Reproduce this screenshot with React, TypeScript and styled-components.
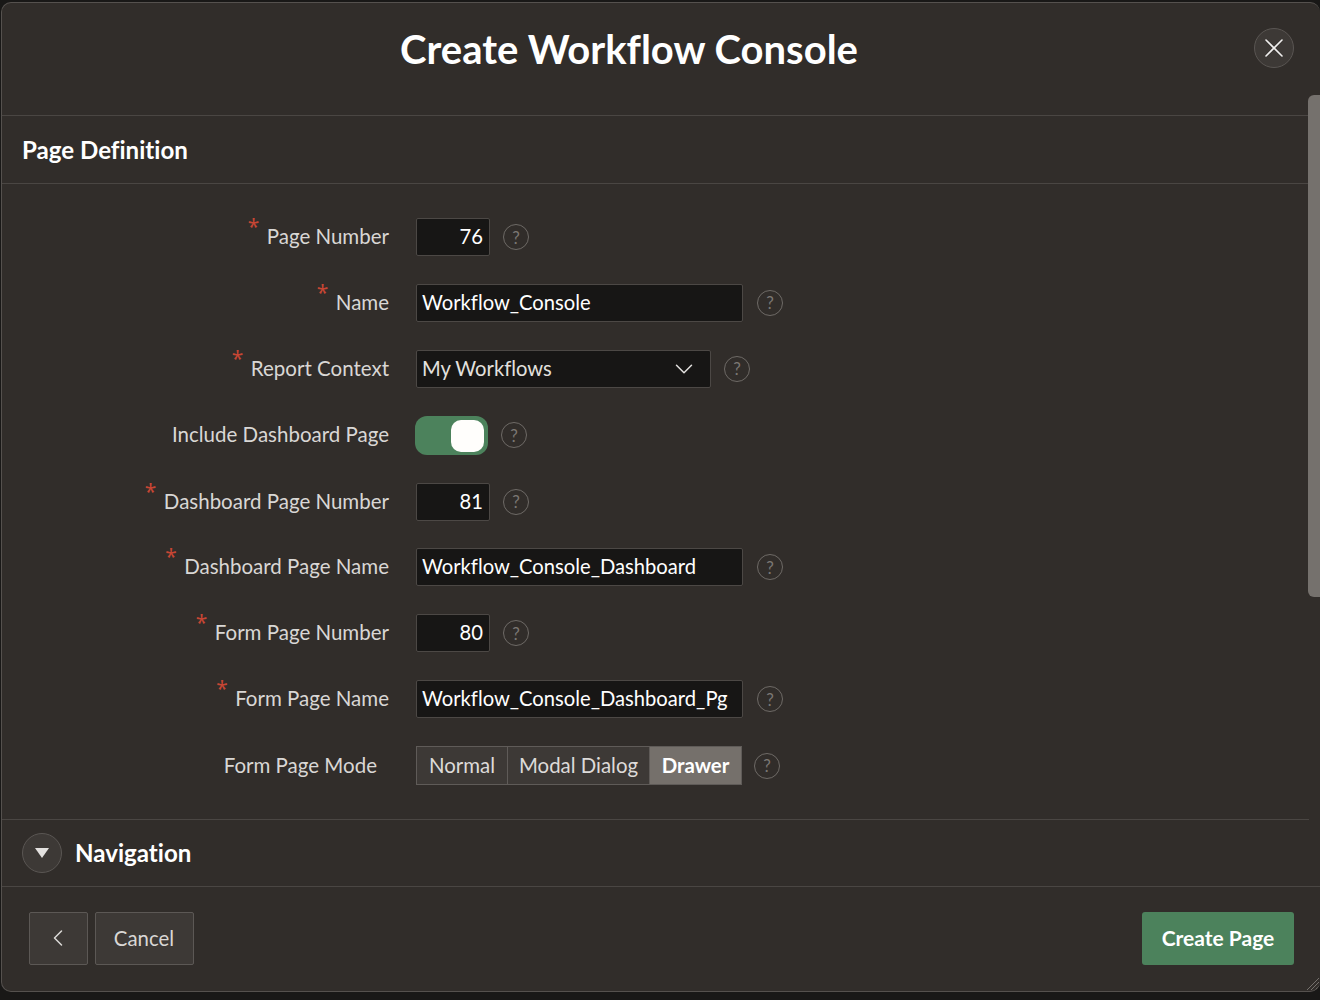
import styled, { createGlobalStyle } from "styled-components";
import { X, ChevronDown, ChevronLeft } from "lucide-react";

const GlobalStyle = createGlobalStyle`
  html, body {
    margin: 0;
    padding: 0;
    background: #191817;
    font-family: Lato, "Noto Sans", sans-serif;
    font-variant-ligatures: none;
  }
  * { box-sizing: border-box; }
`;

const Page = styled.div`
  width: 1320px;
  height: 1000px;
  padding: 2px 0 8px 1px;
  overflow: hidden;
`;

const Dialog = styled.div`
  position: relative;
  width: 100%;
  height: 990px;
  background: #312d2a;
  border: 1px solid #55514e;
  border-right: 0;
  border-radius: 10px;
  display: flex;
  flex-direction: column;
  overflow: hidden;
`;

const Header = styled.header`
  height: 112px;
  flex: none;
  position: relative;
  display: flex;
  padding: 0 64px 0 0;
  justify-content: center;
  align-items: flex-start;
`;

const Title = styled.h1`
  margin: 20px 0 0;
  font-size: 40px;
  line-height: 52px;
  font-weight: 700;
  color: #fff;
`;

const CloseButton = styled.button`
  position: absolute;
  top: 25px;
  right: 26px;
  width: 40px;
  height: 40px;
  border-radius: 50%;
  background: #3d3936;
  border: 1.5px solid #5a5653;
  color: #f0efee;
  display: flex;
  align-items: center;
  justify-content: center;
  padding: 0;
`;

const Content = styled.div`
  flex: 1;
  display: flex;
  flex-direction: column;
  margin-right: 11px;
`;

const SectionHead = styled.div<{ $height: number }>`
  height: ${({ $height }) => $height}px;
  flex: none;
  border-top: 1px solid #4a4643;
  border-bottom: 1px solid #4a4643;
  padding-left: 20px;
  display: flex;
  align-items: center;
  gap: 13px;
`;

const SectionTitle = styled.h2`
  margin: 0;
  padding-bottom: 1px;
  font-size: 24.1px;
  font-weight: 700;
  color: #fff;
`;

const FormBody = styled.div`
  flex: none;
  height: 635px;
  padding-top: 34px;
  display: flex;
  flex-direction: column;
  gap: 27.9px;
`;

const Row = styled.div`
  display: flex;
  align-items: center;
  min-height: 38px;
`;

const LabelCell = styled.div<{ $inset?: number }>`
  width: 414px;
  flex: none;
  padding-right: ${({ $inset }) => 27 + ($inset ?? 0)}px;
  padding-bottom: 2px;
  display: flex;
  justify-content: flex-end;
`;

const Label = styled.label`
  position: relative;
  font-size: 20.5px;
  line-height: 28px;
  color: #d9d7d5;
`;

const Asterisk = styled.span`
  position: absolute;
  left: -19px;
  top: -10px;
  font-family: "Noto Sans", sans-serif;
  font-size: 21px;
  line-height: 28px;
  color: #c74634;
`;

const Input = styled.div<{ $width: number; $align?: string }>`
  width: ${({ $width }) => $width}px;
  height: 38px;
  background: #171615;
  border: 1px solid #4c4845;
  border-radius: 2px;
  padding: 0 ${({ $align }) => ($align === "right" ? 6 : 5)}px 2px 5px;
  display: flex;
  align-items: center;
  justify-content: ${({ $align }) => ($align === "right" ? "flex-end" : "flex-start")};
  color: #fff;
  font-size: 20.2px;
`;

const Select = styled(Input)`
  justify-content: space-between;
  color: #e3e1df;
  padding: 0 11px 0 5px;
  svg {
    color: #e3e1df;
  }
`;

const SelectValue = styled.span`
  padding-bottom: 2px;
`;

const Toggle = styled.div`
  width: 73px;
  height: 39px;
  margin-left: -1px;
  border-radius: 12px;
  background: #4c825c;
  padding: 4px;
  display: flex;
  justify-content: flex-end;
`;

const Knob = styled.span`
  width: 33px;
  height: 32px;
  border-radius: 10px;
  background: #fffefc;
`;

const Segments = styled.div`
  display: flex;
  height: 39px;
  border: 1px solid #5f5b58;
`;

const Segment = styled.div<{ $active?: boolean; $width: number }>`
  width: ${({ $width }) => $width}px;
  display: flex;
  align-items: center;
  justify-content: center;
  padding-bottom: 1px;
  font-size: 20.4px;
  background: ${({ $active }) => ($active ? "#75706b" : "#3d3936")};
  color: ${({ $active }) => ($active ? "#fff" : "#dddbd9")};
  font-weight: ${({ $active }) => ($active ? 700 : 400)};
  & + & {
    border-left: 1px solid #5f5b58;
  }
`;

const Help = styled.span<{ $gap: number }>`
  margin-left: ${({ $gap }) => $gap}px;
  width: 26px;
  height: 26px;
  flex: none;
  border: 1.5px solid #6e6a66;
  border-radius: 50%;
  display: flex;
  align-items: center;
  justify-content: center;
  color: #7b7773;
  font-size: 17px;
  line-height: 1;
`;

const CollapseButton = styled.span`
  width: 40px;
  height: 40px;
  border-radius: 50%;
  background: #3d3936;
  border: 1.5px solid #5a5653;
  display: flex;
  align-items: center;
  justify-content: center;
`;

const Footer = styled.footer`
  flex: 1;
  display: flex;
  align-items: flex-start;
  justify-content: space-between;
  padding: 25px 26px 0 27px;
  margin-top: -1px;
  border-top: 1px solid #4a4643;
`;

const FooterLeft = styled.div`
  display: flex;
  gap: 7px;
`;

const GhostButton = styled.button<{ $width: number }>`
  width: ${({ $width }) => $width}px;
  height: 53px;
  background: #3d3936;
  border: 1px solid #5c5855;
  border-radius: 2px;
  color: #d9d7d5;
  font-family: inherit;
  font-size: 20.4px;
  display: flex;
  align-items: center;
  justify-content: center;
  padding: 0 1px 2px 0;
`;

const PrimaryButton = styled.button`
  width: 152px;
  height: 53px;
  background: #4c825c;
  border: 0;
  border-radius: 3px;
  color: #fff;
  font-family: inherit;
  font-size: 21px;
  font-weight: 700;
  padding: 0 0 2px;
`;

const ScrollThumb = styled.div`
  position: absolute;
  top: 92px;
  right: 0;
  width: 12px;
  height: 502px;
  border-radius: 6px 0 0 6px;
  background: #75716d;
`;

const Grip = styled.svg`
  position: absolute;
  right: 0;
  bottom: 0;
`;

type Field = {
  label: string;
  required?: boolean;
  kind: "number" | "text" | "select" | "toggle" | "segments";
  value?: string;
};

const fields: Field[] = [
  { label: "Page Number", required: true, kind: "number", value: "76" },
  { label: "Name", required: true, kind: "text", value: "Workflow_Console" },
  { label: "Report Context", required: true, kind: "select", value: "My Workflows" },
  { label: "Include Dashboard Page", kind: "toggle" },
  { label: "Dashboard Page Number", required: true, kind: "number", value: "81" },
  { label: "Dashboard Page Name", required: true, kind: "text", value: "Workflow_Console_Dashboard" },
  { label: "Form Page Number", required: true, kind: "number", value: "80" },
  { label: "Form Page Name", required: true, kind: "text", value: "Workflow_Console_Dashboard_Pg" },
  { label: "Form Page Mode", kind: "segments" },
];

function Control({ field }: { field: Field }) {
  switch (field.kind) {
    case "number":
      return (
        <>
          <Input $width={74} $align="right">{field.value}</Input>
          <Help $gap={13}>?</Help>
        </>
      );
    case "text":
      return (
        <>
          <Input $width={327}>{field.value}</Input>
          <Help $gap={14}>?</Help>
        </>
      );
    case "select":
      return (
        <>
          <Select $width={295}>
            <SelectValue>{field.value}</SelectValue>
            <ChevronDown size={30} strokeWidth={1.2} />
          </Select>
          <Help $gap={13}>?</Help>
        </>
      );
    case "toggle":
      return (
        <>
          <Toggle><Knob /></Toggle>
          <Help $gap={13}>?</Help>
        </>
      );
    default:
      return (
        <>
          <Segments>
            <Segment $width={90}>Normal</Segment>
            <Segment $width={142}>Modal Dialog</Segment>
            <Segment $width={92} $active>Drawer</Segment>
          </Segments>
          <Help $gap={12}>?</Help>
        </>
      );
  }
}

export default function App() {
  return (
    <Page>
      <GlobalStyle />
      <Dialog>
        <Header>
          <Title>Create Workflow Console</Title>
          <CloseButton aria-label="Close">
            <X size={32} strokeWidth={1.2} />
          </CloseButton>
        </Header>
        <Content>
          <SectionHead $height={69}>
            <SectionTitle>Page Definition</SectionTitle>
          </SectionHead>
          <FormBody>
            {fields.map((field) => (
              <Row key={field.label}>
                <LabelCell $inset={field.kind === "segments" ? 12 : 0}>
                  <Label>
                    {field.required && <Asterisk>*</Asterisk>}
                    {field.label}
                  </Label>
                </LabelCell>
                <Control field={field} />
              </Row>
            ))}
          </FormBody>
          <SectionHead $height={68}>
            <CollapseButton>
              <svg width="14" height="10" viewBox="0 0 14 10">
                <path d="M0 0h14L7 10z" fill="#e3e1df" />
              </svg>
            </CollapseButton>
            <SectionTitle>Navigation</SectionTitle>
          </SectionHead>
        </Content>
        <Footer>
          <FooterLeft>
            <GhostButton $width={59} aria-label="Previous">
              <ChevronLeft size={28} strokeWidth={1.3} />
            </GhostButton>
            <GhostButton $width={99}>Cancel</GhostButton>
          </FooterLeft>
          <PrimaryButton>Create Page</PrimaryButton>
        </Footer>
        <ScrollThumb />
        <Grip width="14" height="14" viewBox="0 0 14 14">
          <path d="M1 13L13 1M5 13l8-8M9 13l4-4" stroke="#75716d" strokeWidth="1" fill="none" />
        </Grip>
      </Dialog>
    </Page>
  );
}
